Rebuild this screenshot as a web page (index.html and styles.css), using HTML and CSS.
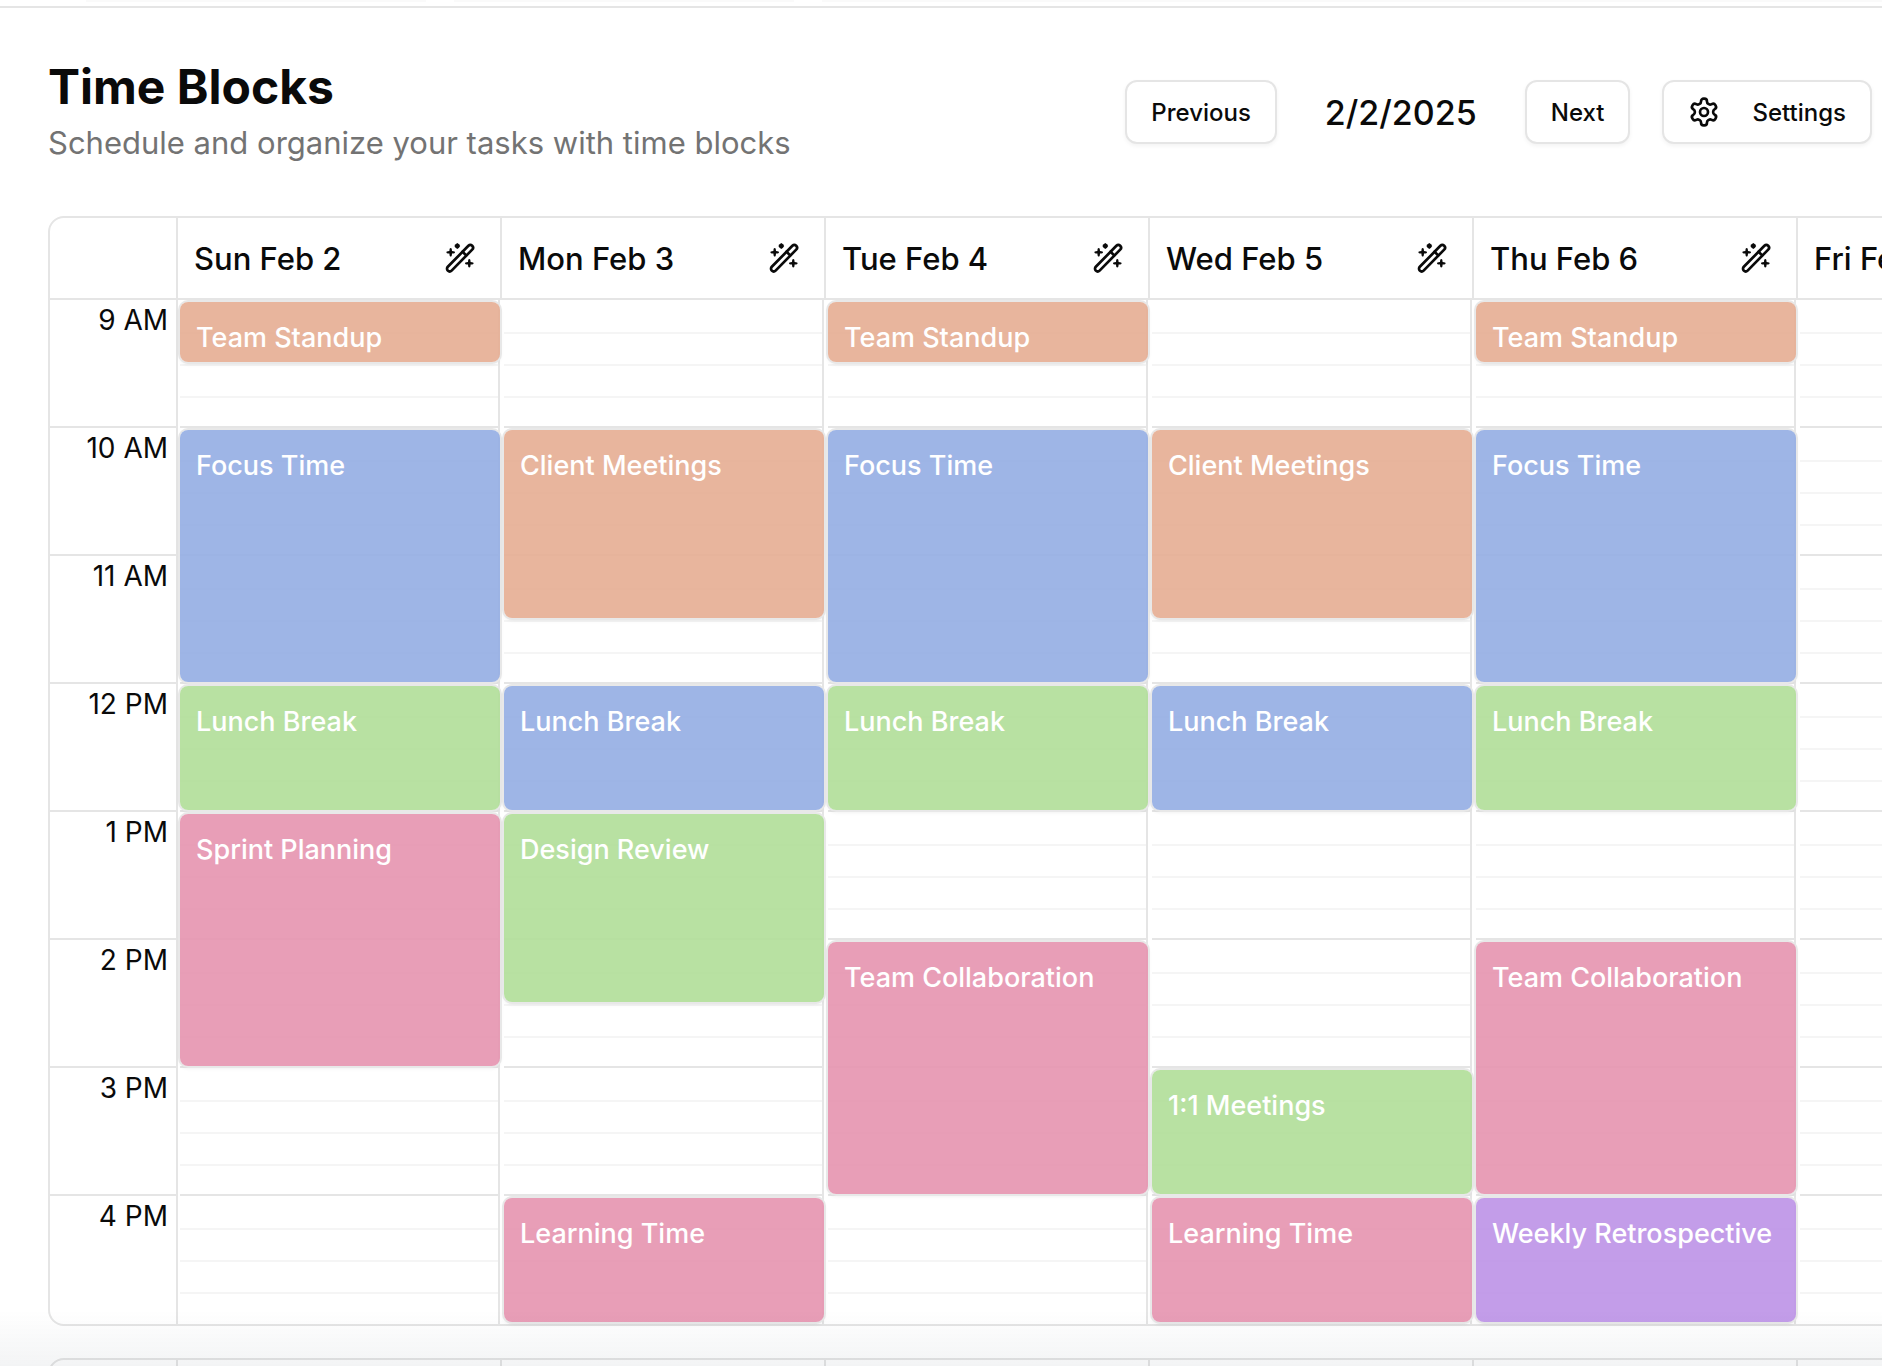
FILE: index.html
```html
<!DOCTYPE html>
<html lang="en">
<head>
    <meta charset="UTF-8">
    <meta name="viewport" content="width=device-width, initial-scale=1.0">
    <title>Time Blocks</title>
    <link rel="stylesheet" href="styles.css">
</head>
<body>

<svg class="sprite" aria-hidden="true">
    <symbol id="wand" viewBox="0 0 32 32">
        <path stroke-width="2.7" d="M3.8 24.8L24.4 3.8A2.6 2.6 0 0 1 28.2 7.6L7.6 28.6A2.6 2.6 0 0 1 3.8 24.8Z"/>
        <path stroke-width="2.7" d="M18.6 9.8L22.2 13.4"/>
        <path fill="currentColor" stroke="none" d="M6.7 6C7.5 6 7.9 6.6 8 9C10.4 9.1 11 9.5 11 10.3S10.4 11.5 8 11.6C7.9 14 7.5 14.6 6.7 14.6S5.5 14 5.4 11.6C3 11.5 2.4 11.1 2.4 10.3S3 9.1 5.4 9C5.5 6.6 5.9 6 6.7 6Z"/>
        <path fill="currentColor" stroke="none" d="M25.3 17C26.1 17 26.5 17.6 26.6 20C29 20.1 29.6 20.5 29.6 21.3S29 22.5 26.6 22.6C26.5 25 26.1 25.6 25.3 25.6S24.1 25 24 22.6C21.6 22.5 21 22.1 21 21.3S21.6 20.1 24 20C24.1 17.6 24.5 17 25.3 17Z"/>
        <path fill="currentColor" stroke="none" d="M13.3 1.1L15 2.3L16.2 4L15 5.7L13.3 6.9L11.6 5.7L10.4 4L11.6 2.3Z"/>
    </symbol>
    <symbol id="gear" viewBox="0 0 24 24">
        <path d="M12.22 2h-.44a2 2 0 0 0-2 2v.18a2 2 0 0 1-1 1.73l-.43.25a2 2 0 0 1-2 0l-.15-.08a2 2 0 0 0-2.73.73l-.22.38a2 2 0 0 0 .73 2.73l.15.1a2 2 0 0 1 1 1.72v.51a2 2 0 0 1-1 1.74l-.15.09a2 2 0 0 0-.73 2.73l.22.38a2 2 0 0 0 2.73.73l.15-.08a2 2 0 0 1 2 0l.43.25a2 2 0 0 1 1 1.73V20a2 2 0 0 0 2 2h.44a2 2 0 0 0 2-2v-.18a2 2 0 0 1 1-1.73l.43-.25a2 2 0 0 1 2 0l.15.08a2 2 0 0 0 2.73-.73l.22-.39a2 2 0 0 0-.73-2.73l-.15-.08a2 2 0 0 1-1-1.74v-.5a2 2 0 0 1 1-1.74l.15-.09a2 2 0 0 0 .73-2.73l-.22-.38a2 2 0 0 0-2.73-.73l-.15.08a2 2 0 0 1-2 0l-.43-.25a2 2 0 0 1-1-1.73V4a2 2 0 0 0-2-2z"/>
        <circle cx="12" cy="12" r="3"/>
    </symbol>
</svg>

<div class="topbar">
    <div class="tab"></div>
    <div class="tab"></div>
    <div class="tab tab-wide"></div>
</div>

<main class="page">
    <header class="header">
        <div>
            <h1 class="title">Time Blocks</h1>
            <p class="subtitle">Schedule and organize your tasks with time blocks</p>
        </div>
        <div class="controls">
            <button type="button" class="btn">Previous</button>
            <span class="date">2/2/2025</span>
            <button type="button" class="btn">Next</button>
            <button type="button" class="btn btn-settings"><svg class="icon"><use href="#gear"/></svg>Settings</button>
        </div>
    </header>

    <section class="calendar" id="calendar"></section>
    <section class="calendar" id="calendarNext"></section>
</main>

<script src="script.js"></script>
</body>
</html>
```
FILE: styles.css
```css
* {
    box-sizing: border-box;
}

body {
    margin: 0;
    height: 100vh;
    overflow: hidden;
    background: #fff;
    color: #0a0a0a;
    font-family: Inter, "Liberation Sans", sans-serif;
}

/* soft shade along the bottom of the window */
body::after {
    content: "";
    position: fixed;
    left: 0;
    right: 0;
    bottom: 0;
    height: 56px;
    background: linear-gradient(rgba(20, 40, 40, 0), rgba(20, 40, 60, 0.05));
    pointer-events: none;
}

h1, p {
    margin: 0;
}

.sprite {
    display: none;
}

.topbar {
    display: flex;
    gap: 28px;
    height: 8px;
    padding-left: 86px;
    border-bottom: 2px solid #e5e5e5;
}

.tab {
    width: 340px;
    height: 2px;
    background: #fafafa;
}

.tab-wide {
    flex: 1;
}

.page {
    padding: 48px 0 0 48px;
}

.header {
    display: flex;
    align-items: center;
    justify-content: space-between;
    padding-right: 10px;
    margin-bottom: 48px;
}

.title {
    font-size: 48px;
    line-height: 62px;
    font-weight: 700;
}

.subtitle {
    font-size: 31px;
    line-height: 50px;
    color: #737373;
}

.controls {
    display: flex;
    align-items: center;
}

.date {
    margin: 0 48px;
    font-size: 34px;
    font-weight: 500;
}

.btn {
    display: flex;
    align-items: center;
    height: 64px;
    padding: 0 24px;
    border: 2px solid #e5e5e5;
    border-radius: 12px;
    background: #fff;
    color: inherit;
    font: 500 24px Inter, "Liberation Sans", sans-serif;
    box-shadow: 0 2px 4px rgba(0, 0, 0, 0.05);
}

.btn-settings {
    gap: 32px;
    margin-left: 32px;
}

.icon {
    width: 32px;
    height: 32px;
    fill: none;
    stroke: currentColor;
    stroke-width: 2;
    stroke-linecap: round;
    stroke-linejoin: round;
}

.calendar {
    display: grid;
    grid-template-columns: 128px repeat(7, minmax(324px, 1fr));
    width: max-content;
    min-width: 100%;
    margin-bottom: 32px;
    border: 2px solid #e5e5e5;
    border-radius: 16px;
}

.head {
    display: flex;
    align-items: center;
    justify-content: space-between;
    height: 82px;
    padding: 0 24px 0 16px;
    border-right: 2px solid #e5e5e5;
    border-bottom: 2px solid #e5e5e5;
    font-size: 31px;
    font-weight: 500;
}

.magic {
    display: flex;
    padding: 0;
    border: 0;
    background: none;
    color: inherit;
}

.times {
    border-right: 2px solid #e5e5e5;
}

.time {
    height: 128px;
    padding-right: 8px;
    border-bottom: 2px solid #e5e5e5;
    font-size: 28px;
    line-height: 40px;
    text-align: right;
}

.time:last-child, .hour:nth-child(8) {
    border-bottom: 0;
}

.day {
    position: relative;
    margin: 0 2px;
    border-right: 2px solid #e5e5e5;
}

.hour {
    height: 128px;
    border-bottom: 2px solid #e5e5e5;
    background: repeating-linear-gradient(transparent 0 32px, #f5f5f5 32px 34px, transparent 34px 64px, #f5f5f5 64px 66px, transparent 66px 96px, #f5f5f5 96px 98px, transparent 98px 128px);
}

.block {
    position: absolute;
    left: 0;
    right: -2px;
    padding: 16px;
    border-radius: 8px;
    color: #fff;
    font-size: 27px;
    font-weight: 500;
    line-height: 40px;
    white-space: nowrap;
    box-shadow: 0 0 0 2px #e8e8e8, 0 2px 4px rgba(0, 0, 0, 0.08);
}

.orange { background: rgba(229, 173, 146, 0.9); }
.blue { background: rgba(147, 173, 227, 0.9); }
.green { background: rgba(176, 222, 152, 0.9); }
.pink { background: rgba(229, 147, 175, 0.9); }
.purple { background: rgba(189, 146, 231, 0.9); }
```
FILE: script.js
```js
const HOURS = ["9 AM", "10 AM", "11 AM", "12 PM", "1 PM", "2 PM", "3 PM", "4 PM"];
const HOUR_HEIGHT = 128;

// start and length are in hours, counted from 9 AM
const DAYS = [
    { name: "Sun Feb 2", blocks: [["Team Standup", 0, 0.5, "orange"], ["Focus Time", 1, 2, "blue"], ["Lunch Break", 3, 1, "green"], ["Sprint Planning", 4, 2, "pink"]] },
    { name: "Mon Feb 3", blocks: [["Client Meetings", 1, 1.5, "orange"], ["Lunch Break", 3, 1, "blue"], ["Design Review", 4, 1.5, "green"], ["Learning Time", 7, 1, "pink"]] },
    { name: "Tue Feb 4", blocks: [["Team Standup", 0, 0.5, "orange"], ["Focus Time", 1, 2, "blue"], ["Lunch Break", 3, 1, "green"], ["Team Collaboration", 5, 2, "pink"]] },
    { name: "Wed Feb 5", blocks: [["Client Meetings", 1, 1.5, "orange"], ["Lunch Break", 3, 1, "blue"], ["1:1 Meetings", 6, 1, "green"], ["Learning Time", 7, 1, "pink"]] },
    { name: "Thu Feb 6", blocks: [["Team Standup", 0, 0.5, "orange"], ["Focus Time", 1, 2, "blue"], ["Lunch Break", 3, 1, "green"], ["Team Collaboration", 5, 2, "pink"], ["Weekly Retrospective", 7, 1, "purple"]] },
    { name: "Fri Feb 7", blocks: [] },
    { name: "Sat Feb 8", blocks: [] }
];

function headRow(days) {
    let html = '<div class="head"></div>';
    days.forEach(function (day) {
        html += '<div class="head"><span>' + day.name + '</span>' +
            '<button type="button" class="magic" aria-label="Fill ' + day.name + '"><svg class="icon"><use href="#wand"/></svg></button></div>';
    });
    return html;
}

function dayColumn(day) {
    let html = '<div class="day">' + HOURS.map(() => '<div class="hour"></div>').join("");
    day.blocks.forEach(function ([title, start, length, color]) {
        const top = start * HOUR_HEIGHT + 2;
        const height = length * HOUR_HEIGHT - 4;
        html += `<div class="block ${color}" style="top:${top}px;height:${height}px">${title}</div>`;
    });
    return html + "</div>";
}

document.getElementById("calendar").innerHTML = headRow(DAYS) +
    '<div class="times">' + HOURS.map(h => '<div class="time">' + h + '</div>').join("") + '</div>' +
    DAYS.map(dayColumn).join("");

// the second calendar has no days loaded yet
document.getElementById("calendarNext").innerHTML = '<div class="head"></div>'.repeat(DAYS.length + 1);
```
